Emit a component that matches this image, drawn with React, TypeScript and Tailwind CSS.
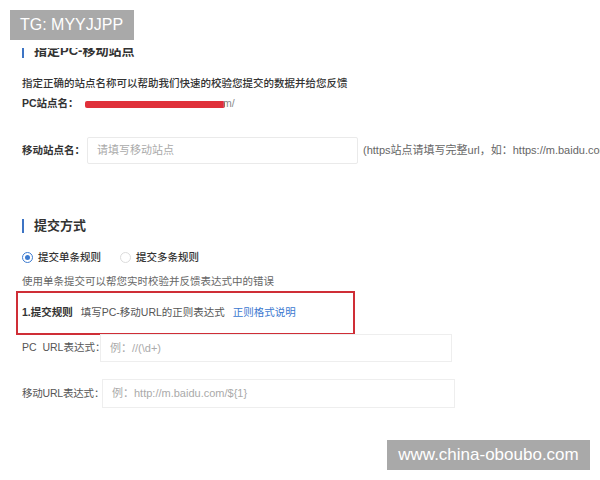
import React from "react";

const FONT = { fontFamily: '"Liberation Sans", "Noto Sans CJK SC", sans-serif' };

function Radio({ checked, label }: { checked?: boolean; label: string }) {
  return (
    <div className="flex items-center">
      <span
        className={`w-[11px] h-[11px] rounded-full border flex items-center justify-center ${
          checked ? "border-[#3d7bd0]" : "border-[#dcdcdc]"
        }`}
      >
        {checked && <span className="w-[5px] h-[5px] rounded-full bg-[#3d7bd0]" />}
      </span>
      <span className="ml-[5px] text-[10.5px] leading-[16px] font-medium text-[#333]">
        {label}
      </span>
    </div>
  );
}

function SectionTitle({ children }: { children: React.ReactNode }) {
  return (
    <div className="flex items-center h-[20px]">
      <span className="w-[2px] h-[14px] bg-[#3d74c4]" />
      <span className="ml-[10px] text-[13px] leading-[20px] font-bold text-[#333]">
        {children}
      </span>
    </div>
  );
}

export default function App() {
  return (
    <div className="relative w-[600px] h-[480px] overflow-hidden bg-white" style={FONT}>
      <div className="pl-[22px]">
        {/* heading cut off by the page top */}
        <div className="mt-[48px] h-[10px] overflow-hidden">
          <div className="-mt-[7px]">
            <SectionTitle>指定PC-移动站点</SectionTitle>
          </div>
        </div>

        <p className="mt-[17px] text-[10.5px] leading-[16px] font-medium text-[#333]">
          指定正确的站点名称可以帮助我们快速的校验您提交的数据并给您反馈
        </p>

        <div className="mt-[5px] flex items-center h-[16px]">
          <span className="w-[63px] text-[10.5px] font-bold text-[#333]">PC站点名：</span>
          <span className="flex items-center">
            <span className="w-[140px] h-[7px] bg-[#e0303a] rounded-[2px]" />
            <span className="-ml-[2px] text-[10.5px] text-[#888]">m/</span>
          </span>
        </div>

        <div className="mt-[25px] flex items-center whitespace-nowrap">
          <span className="w-[65px] shrink-0 text-[10.5px] font-bold text-[#333]">移动站点名：</span>
          <div className="w-[271px] shrink-0 h-[27px] border border-[#eaeaea] rounded-[2px] flex items-center pl-[9px] text-[11px] text-[#aaa]">
            请填写移动站点
          </div>
          <span className="ml-[5px] text-[11px] text-[#666]">
            (https站点请填写完整url，如：https://m.baidu.com)
          </span>
        </div>

        <div className="mt-[52px]">
          <SectionTitle>提交方式</SectionTitle>
        </div>

        <div className="mt-[13px] flex items-center gap-[19px]">
          <Radio checked label="提交单条规则" />
          <Radio label="提交多条规则" />
        </div>

        <p className="mt-[8px] text-[10.5px] leading-[16px] text-[#666]">
          使用单条提交可以帮您实时校验并反馈表达式中的错误
        </p>

        <div className="mt-[2px] -ml-[6px] w-[339px] h-[44px] border-2 border-[#cf2e36] flex items-center pl-[4px] text-[10.5px] whitespace-nowrap">
          <span className="font-bold text-[#333]">1.提交规则</span>
          <span className="ml-[8px] text-[#555]">填写PC-移动URL的正则表达式</span>
          <span className="ml-[8px] text-[#3b78d0]">正则格式说明</span>
        </div>

        <div className="-mt-[1px] flex items-center whitespace-nowrap">
          <span className="w-[78px] shrink-0 text-[10.5px] text-[#555] whitespace-pre">PC  URL表达式：</span>
          <div className="w-[352px] shrink-0 h-[28px] border border-[#eeeeee] flex items-center pl-[9px] text-[11px] text-[#aaa]">
            例：//(\d+)
          </div>
        </div>

        <div className="mt-[17px] flex items-center whitespace-nowrap">
          <span className="w-[80px] shrink-0 text-[10.5px] tracking-[-0.2px] text-[#555]">移动URL表达式：</span>
          <div className="w-[353px] shrink-0 h-[29px] border border-[#eeeeee] flex items-center pl-[9px] text-[11px] text-[#aaa]">
            例：http://m.baidu.com/${"{1}"}
          </div>
        </div>
      </div>

      {/* watermarks */}
      <div className="absolute left-[10px] top-[10px] w-[124px] h-[30px] bg-[#a9a9a9] flex items-center pl-[10px] text-white text-[16px]">
        TG: MYYJJPP
      </div>
      <div className="absolute left-[387px] top-[440px] w-[203px] h-[30px] bg-[#a9a9a9] flex items-center justify-center text-white text-[17px]">
        www.china-oboubo.com
      </div>
    </div>
  );
}
